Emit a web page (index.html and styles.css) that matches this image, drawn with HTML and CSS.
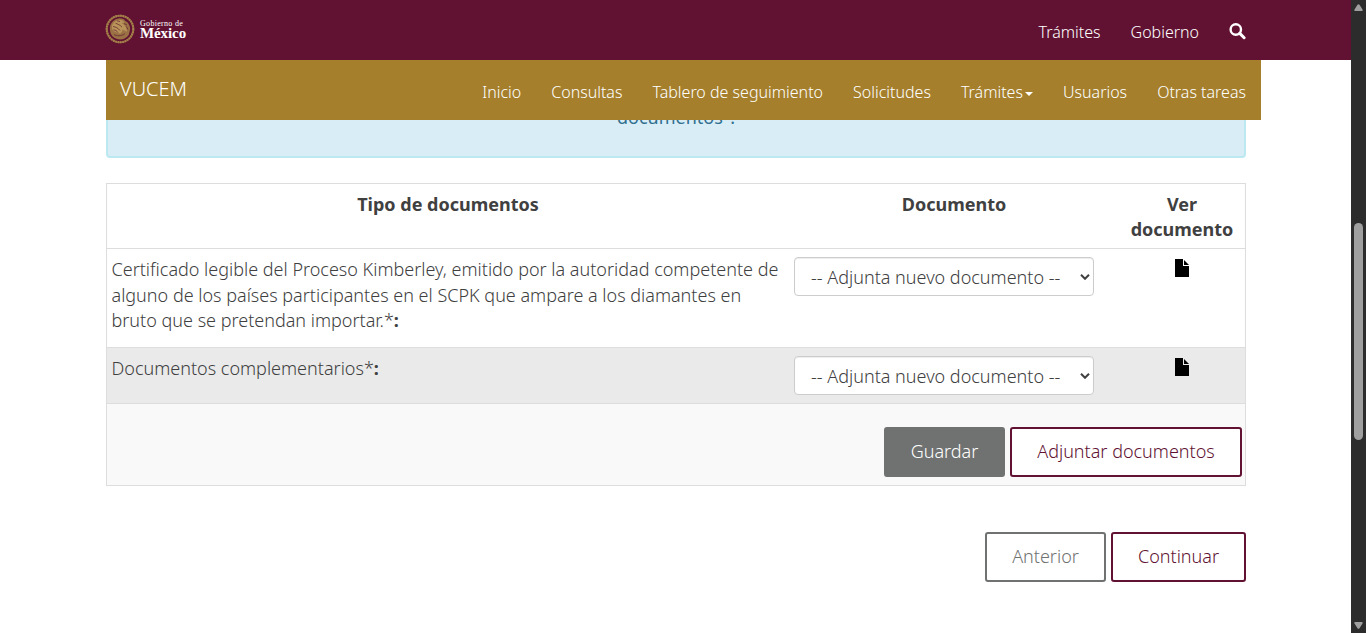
FILE: index.html
```html
<!DOCTYPE html>
<html lang="es">
<head>
<meta charset="utf-8">
<title>VUCEM</title>
<link rel="stylesheet" href="styles.css">
</head>
<body>
<div class="page">
  <header class="gov-bar">
    <a class="gov-logo">
      <svg class="seal" viewBox="0 0 30 30" width="30" height="30">
        <circle cx="15" cy="15" r="13.300" fill="none" stroke="#8a5f3c" stroke-width="2"/>
        <circle cx="15" cy="15" r="13.300" fill="none" stroke="#a8824c" stroke-width="2" stroke-dasharray="1.600 .8"/>
        <path d="M5 13c.5-4.500 4.500-8.300 9-8.600 3-.2 5.500.8 6.300 2.600l2.200 1.200c1.800 2.200 2.800 4.600 2.600 7.300l-1.300 5.200c-1.800 3-5 4.700-8.800 4.700-4 0-7.300-2-8.800-4.800C5 18.300 4.700 15.500 5 13z" fill="#9a7045"/>
        <path d="M7 12c1-4 4.500-6.300 8.500-6 2 .2 3.500 1.300 4 2.600-1 .5-2 .2-2.800.5 3 1.600 5 4.600 5.300 8.400-2-.2-3-1.300-4.500-2.200.3 2-1 3.800-3 4.200l-4-1.500c-2.800-1.100-4-3.400-3.500-6z" fill="#b8945a"/>
        <path d="M8 12.500c3 .6 5 1.400 7 4M8.500 15.800c2 .2 3.300 1 4.500 2.800M10.500 9.200c2.300 1 4.500 1.500 6.500 4M19 9.500l3 1.500M21.500 12.500l1.500 3M9 20.500c2.500 1.500 7 2 11-.8M12 6.800l3 .7" fill="none" stroke="#6b2a32" stroke-width=".8"/>
      </svg>
      <span class="wordmark"><span class="wm-small">Gobierno de</span><span class="wm-big">México</span></span>
    </a>
    <nav class="gov-links">
      <a>Trámites</a>
      <a>Gobierno</a>
      <svg class="search" viewBox="0 0 17 17" width="17" height="17"><circle cx="6.800" cy="6.500" r="5.200" fill="none" stroke="#fff" stroke-width="2.400"/><path d="M10.800 10.400l4.300 4.300" stroke="#fff" stroke-width="3" stroke-linecap="round"/></svg>
    </nav>
  </header>
  <nav class="sub-bar">
    <a class="brand">VUCEM</a>
    <div class="menu">
      <a>Inicio</a>
      <a>Consultas</a>
      <a>Tablero de seguimiento</a>
      <a>Solicitudes</a>
      <a>Trámites<i class="caret"></i></a>
      <a>Usuarios</a>
      <a>Otras tareas</a>
    </div>
  </nav>
  <main class="content">
    <div class="alert">documentos".</div>
    <div class="docs">
      <div class="row head">
        <div>Tipo de documentos</div>
        <div>Documento</div>
        <div>Ver documento</div>
      </div>
      <div class="row first">
        <div class="label">Certificado legible del Proceso Kimberley, emitido por la autoridad competente de alguno de los países participantes en el SCPK que ampare a los diamantes en bruto que se pretendan importar.*<b>:</b></div>
        <div><div class="select"><span>-- Adjunta nuevo documento --</span><svg viewBox="0 0 10 6" width="10" height="6"><path d="M1 .8l4 4 4-4" fill="none" stroke="#404041" stroke-width="2"/></svg></div></div>
        <div class="view"><svg viewBox="0 0 14 18" width="14" height="18"><path d="M0 0h8v7h6v11H0z"/><path d="M9 1l5 5H9z"/></svg></div>
      </div>
      <div class="row second">
        <div class="label">Documentos complementarios*<b>:</b></div>
        <div><div class="select"><span>-- Adjunta nuevo documento --</span><svg viewBox="0 0 10 6" width="10" height="6"><path d="M1 .8l4 4 4-4" fill="none" stroke="#404041" stroke-width="2"/></svg></div></div>
        <div class="view"><svg viewBox="0 0 14 18" width="14" height="18"><path d="M0 0h8v7h6v11H0z"/><path d="M9 1l5 5H9z"/></svg></div>
      </div>
      <div class="actions">
        <button class="btn save">Guardar</button>
        <button class="btn primary attach">Adjuntar documentos</button>
      </div>
    </div>
    <div class="pager">
      <button class="btn back">Anterior</button>
      <button class="btn primary next">Continuar</button>
    </div>
  </main>
</div>
<aside class="scrollbar">
  <svg viewBox="0 0 9 8" width="9" height="8"><path d="M3.500 .8q1-1 2 0l3 4.700q.8 1.500-.8 1.500H1.300Q-.3 7 .5 5.500z" fill="#9f9f9f"/></svg>
  <div class="thumb"></div>
  <svg class="down" viewBox="0 0 9 8" width="9" height="8"><path d="M3.500 7.200q1 1 2 0l3-4.700Q9.300 1 7.700 1H1.300Q-.3 1 .5 2.500z" fill="#9f9f9f"/></svg>
</aside>
</body>
</html>
```
FILE: styles.css
```css
* { box-sizing: border-box; }
body {
  margin: 0;
  height: 633px;
  display: flex;
  overflow: hidden;
  background: #fff;
  color: #404041;
  font: 300 18px/25.7px "Noto Sans", sans-serif;
}
.page { flex: 1; }
.gov-bar {
  height: 60px;
  padding: 0 105px 0 106px;
  display: flex;
  justify-content: space-between;
  background: #611232;
  color: #fff;
}
.gov-logo { display: flex; gap: 5px; padding-top: 14px; }
.seal { margin-left: -1px; }
.wordmark {
  display: flex;
  flex-direction: column;
  padding-top: 5px;
  font-family: "Liberation Serif", serif;
  font-weight: 700;
  white-space: nowrap;
}
.wm-small { font-size: 8px; line-height: 9px; letter-spacing: .3px; font-weight: 400; }
.wm-big { font-size: 15px; line-height: 11px; letter-spacing: -.1px; }
.gov-links { display: flex; gap: 30px; padding-top: 20px; font-size: 16px; }
.search { margin-top: 3px; }
.sub-bar {
  position: relative;
  z-index: 1;
  width: 1155px;
  height: 60px;
  margin-left: 106px;
  padding: 0 15px 0 14px;
  display: flex;
  justify-content: space-between;
  background: #a57f2c;
  color: #fff;
}
.brand { padding-top: 16px; font-size: 20px; }
.menu { display: flex; gap: 30px; padding-top: 20px; font-size: 16px; white-space: nowrap; }
.caret {
  display: inline-block;
  margin-left: 2px;
  vertical-align: middle;
  border-top: 4px solid #fff;
  border-left: 4px solid transparent;
  border-right: 4px solid transparent;
}
.content { width: 1140px; margin-left: 106px; }
.alert {
  height: 68px;
  margin-top: -30px;
  padding-top: 13px;
  border: 2px solid #bce8f1;
  border-radius: 4px;
  background: #d9edf7;
  color: #31708f;
  font-weight: 400;
  text-align: center;
}
.docs { margin-top: 25px; border: 1px solid #ddd; }
.row { display: grid; grid-template-columns: 682px 330px 126px; border-bottom: 1px solid #ddd; }
.row > div { padding: 8px 5px; }
.row > .label { padding-left: 4.500px; }
.head { height: 65px; font-weight: 700; line-height: 25.2px; text-align: center; }
.first { height: 99px; }
.second { height: 56px; background: #eaeaea; }
.row b { font-weight: 700; }
.select {
  width: 300px;
  height: 39px;
  padding: 0 3px 0 16px;
  display: flex;
  align-items: center;
  justify-content: space-between;
  border: 1px solid #ccc;
  border-radius: 4px;
  background: #fff;
  box-shadow: inset 0 1px 1px rgba(0, 0, 0, .075);
  white-space: nowrap;
}
.select span { padding-top: 3px; }
.row > .view { padding-top: 10px; text-align: center; line-height: 0; }
.actions { height: 81px; padding: 23px 3px 0; display: flex; justify-content: flex-end; gap: 5px; background: #f9f9f9; }
.btn {
  height: 50px;
  padding: 0;
  border: 2px solid #6f7271;
  border-radius: 3px;
  background: #fff;
  color: #6f7271;
  font: inherit;
}
.save { width: 121px; background: #6f7271; color: #fff; }
.primary { border-color: #611232; color: #611232; }
.attach { width: 232px; }
.pager { display: flex; justify-content: flex-end; gap: 5px; margin-top: 46px; }
.back { width: 121px; }
.next { width: 135px; }
.scrollbar {
  width: 15px;
  padding: 4px 0;
  display: flex;
  flex-direction: column;
  align-items: center;
  background: #2c2c2c;
}
.thumb { width: 9px; height: 217px; margin-top: 211px; border-radius: 5px; background: #9f9f9f; }
.down { margin-top: auto; }
```
